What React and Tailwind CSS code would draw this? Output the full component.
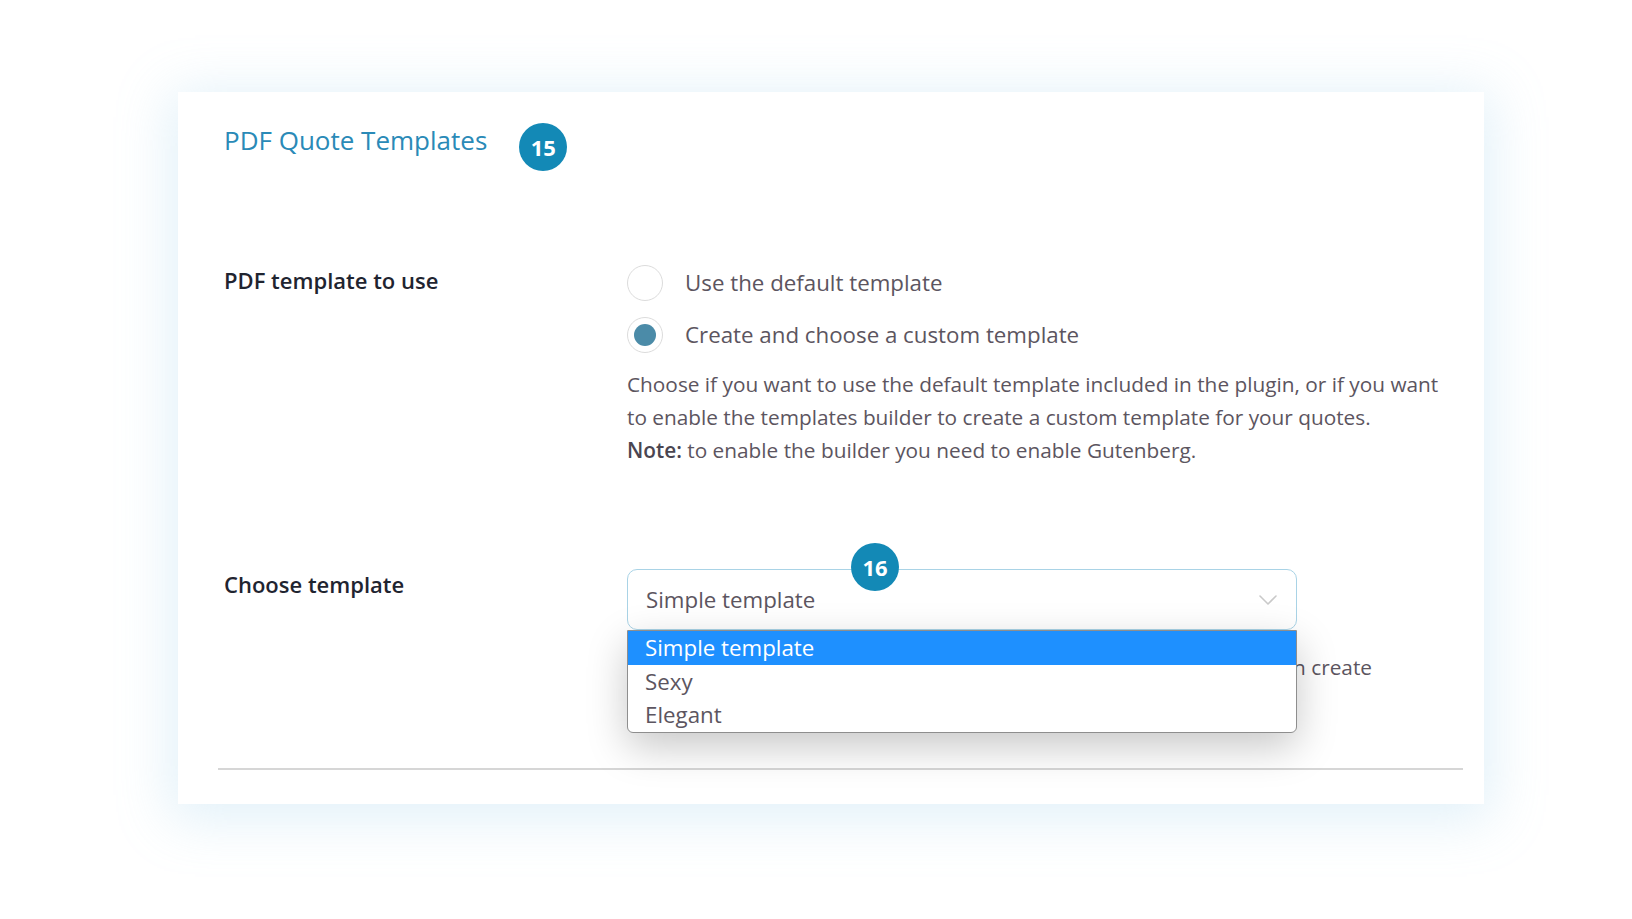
import React from "react";

const font = { fontFamily: '"Open Sans", "Noto Sans", sans-serif' };

function Badge({ n, className = "" }) {
  return (
    <div
      className={`flex h-[48px] w-[48px] items-center justify-center rounded-full bg-[#1389b6] text-[22px] font-bold text-white ${className}`}
    >
      {n}
    </div>
  );
}

function Radio({ checked, label }) {
  return (
    <div className="flex h-[36px] items-center">
      <div className="flex h-[36px] w-[36px] items-center justify-center rounded-full border border-[#dcdcdc] bg-white">
        {checked && <div className="h-[22px] w-[22px] rounded-full bg-[#4b8ba8]" />}
      </div>
      <span className="ml-[22px] text-[22.3px] leading-[36px] text-[#5c5560]">{label}</span>
    </div>
  );
}

export default function App() {
  return (
    <div className="min-h-screen bg-white pl-[178px] pt-[92px]" style={font}>
      <div className="flex h-[712px] w-[1306px] flex-col bg-white pt-[30px] shadow-[0_8px_50px_8px_rgba(150,205,235,0.28)]">
        <div className="flex items-start pl-[46px]">
          <h1 className="text-[26px] font-normal leading-[36px] text-[#2a8ab7]">PDF Quote Templates</h1>
          <Badge n="15" className="ml-[32px] mt-px" />
        </div>

        <div className="mt-[94px] flex items-start pl-[46px]">
          <div className="w-[403px] text-[22px] font-semibold leading-[30px] text-[#1f2430]">PDF template to use</div>
          <div className="flex flex-col">
            <Radio label="Use the default template" />
            <div className="mt-[16px]">
              <Radio checked label="Create and choose a custom template" />
            </div>
            <div className="mt-[15px] whitespace-nowrap text-[20.8px] leading-[33px] text-[#5c5560]">
              Choose if you want to use the default template included in the plugin, or if you want
              <br />
              to enable the templates builder to create a custom template for your quotes.
              <br />
              <span className="font-semibold text-[#4a4550]">Note:</span> to enable the builder you need to enable Gutenberg.
            </div>
          </div>
        </div>

        <div className="mt-[102px] flex items-start pl-[46px]">
          <div className="w-[403px] text-[22px] font-semibold leading-[30px] text-[#1f2430]">Choose template</div>
          <div className="relative flex flex-col">
            <div className="relative flex h-[61px] w-[670px] items-center justify-between rounded-[10px] border border-[#a9d3e6] bg-white pl-[18px] pr-[19px]">
              <span className="text-[22.3px] text-[#5c5560]">Simple template</span>
              <svg width="18" height="10" viewBox="0 0 18 10" fill="none">
                <path d="M1 1l8 8 8-8" stroke="#c9c9c9" strokeWidth="1.6" strokeLinecap="round" strokeLinejoin="round" />
              </svg>
              <Badge n="16" className="absolute left-[223px] top-[-27px]" />
            </div>
            <div className="mt-[21px] w-[745px] whitespace-nowrap text-right text-[20.8px] leading-[33px] text-[#5c5560]">
              Select one of the templates or build your own, then create
            </div>
            <div className="absolute left-0 top-[61px] w-[670px] overflow-hidden rounded-b-[6px] border border-[#8e8e8e] bg-white shadow-[0_14px_40px_rgba(0,0,0,0.22)]">
              <div className="h-[34px] bg-[#1e90ff] pl-[17px] text-[22.3px] leading-[34px] text-white">Simple template</div>
              <div className="h-[33px] pl-[17px] text-[22.3px] leading-[33px] text-[#5c5560]">Sexy</div>
              <div className="h-[34px] pl-[17px] text-[22.3px] leading-[33px] text-[#5c5560]">Elegant</div>
            </div>
          </div>
        </div>

        <div className="mb-[34px] ml-[40px] mr-[21px] mt-auto h-[2px] bg-[#d6d6d6]" />
      </div>
    </div>
  );
}
